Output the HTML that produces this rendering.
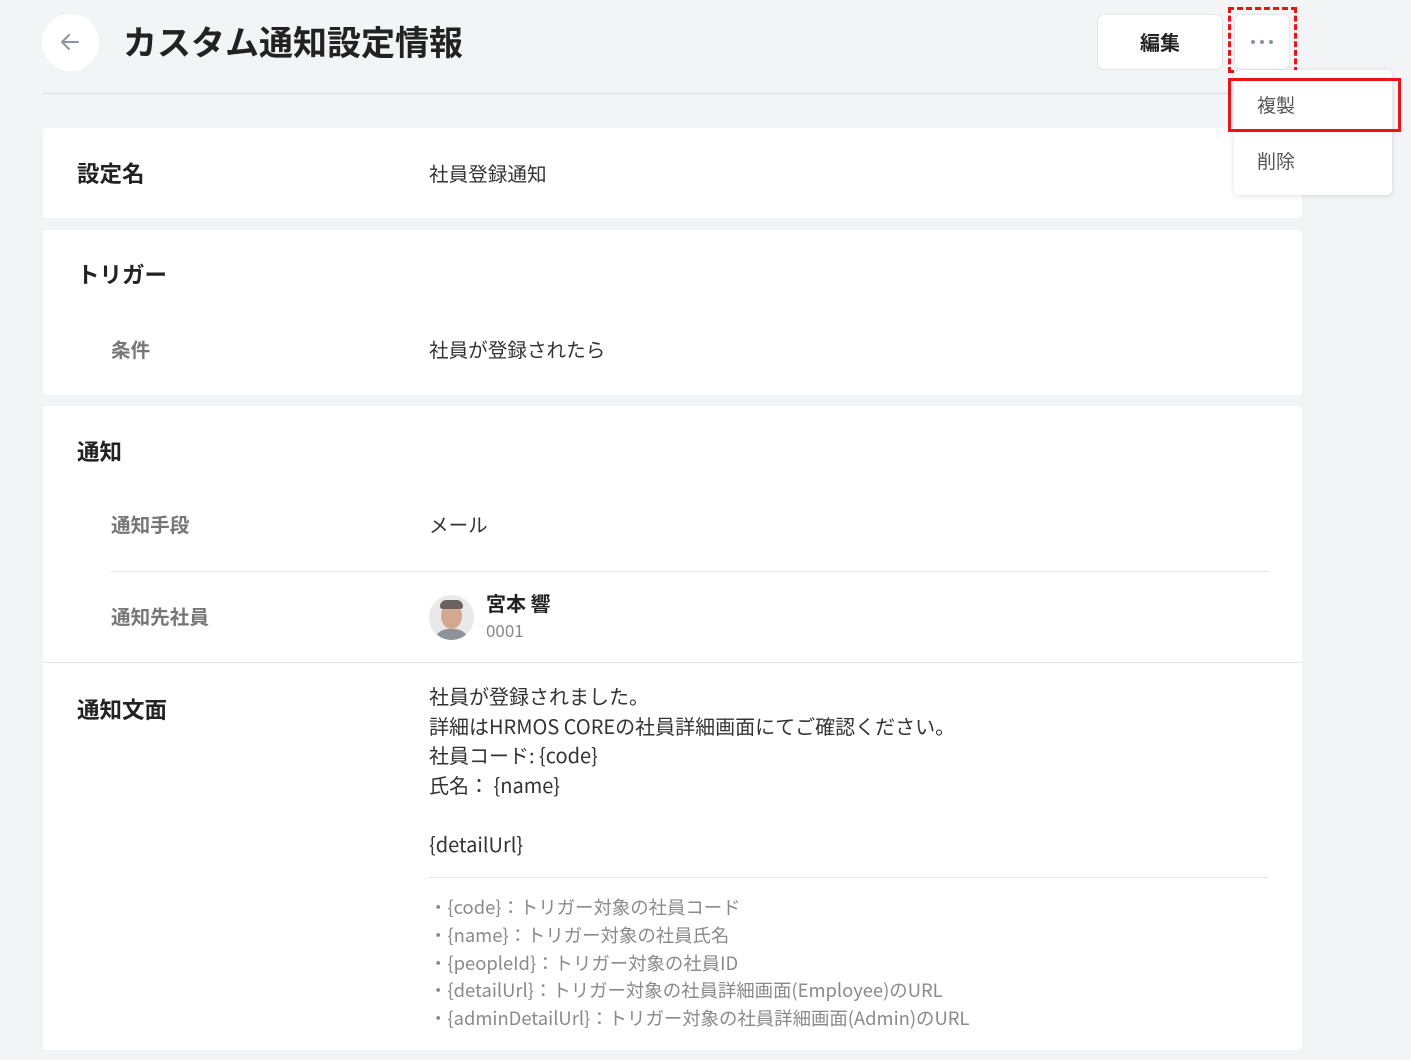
<!DOCTYPE html>
<html><head><meta charset="utf-8"><style>
*{margin:0;padding:0;box-sizing:border-box}
body{width:1411px;height:1060px;background:#f3f4f6;font-family:"Noto Sans CJK JP","Liberation Sans",sans-serif;color:#222;position:relative;overflow:hidden}
.a{position:absolute}
.card{position:absolute;left:43px;width:1259px;background:#fff;border-radius:4px}
.h{position:absolute;font-size:22.5px;font-weight:bold;color:#222;line-height:1}
.l{position:absolute;font-size:19.6px;font-weight:bold;color:#777;line-height:1}
.v{position:absolute;font-size:19.6px;color:#333;line-height:1}
</style></head><body>
<div class="a" style="left:42px;top:14px;width:57px;height:57px;border-radius:50%;background:#fff"></div>
<svg class="a" style="left:58px;top:30px" width="24" height="24" viewBox="0 0 24 24"><path d="M20 12H5M11 5l-7 7 7 7" fill="none" stroke="#8a93a0" stroke-width="2" stroke-linecap="round" stroke-linejoin="round"/></svg>
<div class="a" style="left:123px;top:21px;font-size:34px;font-weight:bold;line-height:1.2">カスタム通知設定情報</div>
<div class="a" style="left:43px;top:93px;width:1259px;height:1px;background:#dcdee2"></div>
<div class="a" style="left:1097px;top:14px;width:126px;height:56px;background:#fff;border:1px solid #e3e5e8;border-radius:7px;font-size:20px;font-weight:bold;text-align:center;line-height:54px">編集</div>
<div class="a" style="left:1234px;top:14px;width:56px;height:56px;background:#fff;border:1px solid #e3e5e8;border-radius:7px"></div>
<div class="a" style="left:1251px;top:40px;width:4px;height:4px;border-radius:50%;background:#8a93a0"></div>
<div class="a" style="left:1260px;top:40px;width:4px;height:4px;border-radius:50%;background:#8a93a0"></div>
<div class="a" style="left:1269px;top:40px;width:4px;height:4px;border-radius:50%;background:#8a93a0"></div>
<div class="a" style="left:1228px;top:7px;width:69px;height:66px;border:3px dashed #e8141a"></div>

<div class="card" style="top:128px;height:90px"></div>
<div class="h" style="left:77px;top:162px">設定名</div>
<div class="v" style="left:429px;top:163px">社員登録通知</div>

<div class="card" style="top:230px;height:165px"></div>
<div class="h" style="left:77px;top:263px">トリガー</div>
<div class="l" style="left:111px;top:339px">条件</div>
<div class="v" style="left:429px;top:339px">社員が登録されたら</div>

<div class="card" style="top:406px;height:644px"></div>
<div class="h" style="left:77px;top:440px">通知</div>
<div class="l" style="left:111px;top:514px">通知手段</div>
<div class="v" style="left:429px;top:514px">メール</div>
<div class="a" style="left:111px;top:571px;width:1157px;height:1px;background:#e3e5e8"></div>
<div class="l" style="left:111px;top:606px">通知先社員</div>
<div class="a" style="left:429px;top:595px;width:45px;height:45px;border-radius:50%;background:#e9e9ea;overflow:hidden">
<div class="a" style="left:12px;top:8px;width:21px;height:26px;border-radius:50%;background:#d2a890"></div>
<div class="a" style="left:11px;top:5px;width:23px;height:9px;border-radius:10px 10px 4px 4px;background:#6a625e"></div>
<div class="a" style="left:5px;top:34px;width:35px;height:16px;border-radius:14px 14px 0 0;background:#8e939a"></div></div>
<div class="a" style="left:486px;top:591px;font-size:20px;font-weight:bold;line-height:1.2">宮本 響</div>
<div class="a" style="left:486px;top:620px;font-size:17px;color:#888;line-height:1.2">0001</div>
<div class="a" style="left:43px;top:662px;width:1259px;height:1px;background:#e3e5e8"></div>
<div class="h" style="left:77px;top:698px">通知文面</div>
<div class="a" style="left:429px;top:681px;font-size:20px;line-height:29.6px;color:#333">社員が登録されました。<br>詳細はHRMOS COREの社員詳細画面にてご確認ください。<br>社員コード: {code}<br>氏名： {name}<br><br>{detailUrl}</div>
<div class="a" style="left:429px;top:877px;width:839px;height:1px;background:#e3e5e8"></div>
<div class="a" style="left:429px;top:894px;font-size:18.4px;line-height:27.8px;color:#8a8a8a">・{code}：トリガー対象の社員コード<br>・{name}：トリガー対象の社員氏名<br>・{peopleId}：トリガー対象の社員ID<br>・{detailUrl}：トリガー対象の社員詳細画面(Employee)のURL<br>・{adminDetailUrl}：トリガー対象の社員詳細画面(Admin)のURL</div>

<div class="a" style="left:1234px;top:70px;width:158px;height:125px;background:#fff;border-radius:5px;box-shadow:0 1px 6px rgba(0,0,0,.12);z-index:5"></div>
<div class="a" style="left:1257px;top:91px;font-size:19px;color:#555;z-index:6">複製</div>
<div class="a" style="left:1257px;top:147px;font-size:19px;color:#555;z-index:6">削除</div>
<div class="a" style="left:1228px;top:78px;width:173px;height:54px;border:3px solid #e8141a;z-index:7"></div>
</body></html>
